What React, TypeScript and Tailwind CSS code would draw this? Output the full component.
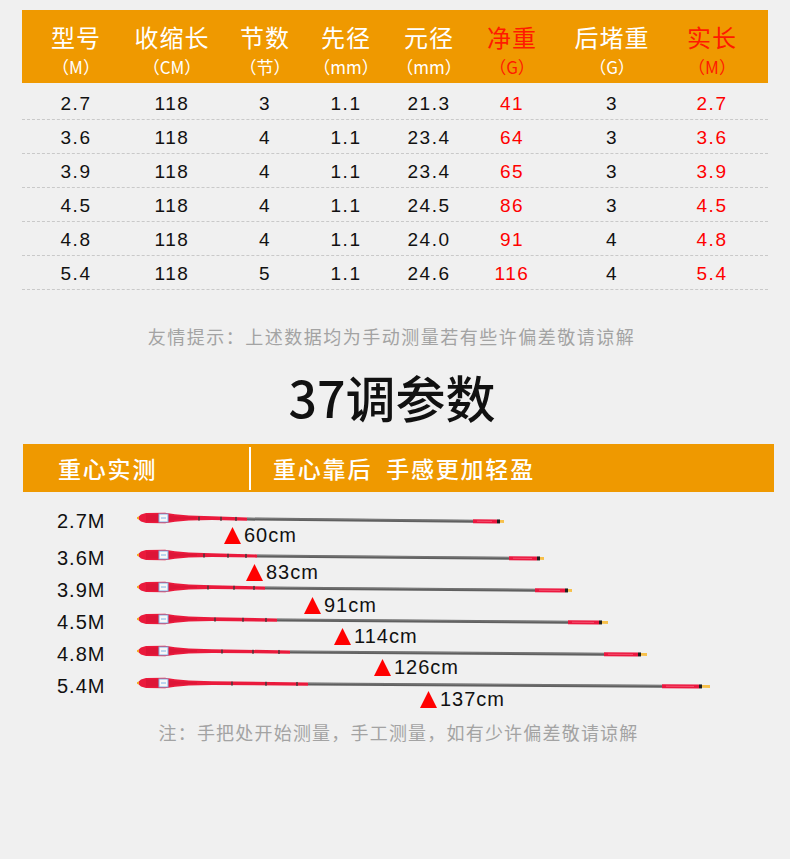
import React from "react";

const headers = [
  { t: "型号", s: "（M）", red: false },
  { t: "收缩长", s: "（CM）", red: false },
  { t: "节数", s: "（节）", red: false },
  { t: "先径", s: "（mm）", red: false },
  { t: "元径", s: "（mm）", red: false },
  { t: "净重", s: "（G）", red: true },
  { t: "后堵重", s: "（G）", red: false },
  { t: "实长", s: "（M）", red: true },
];

const rows = [
  ["2.7", "118", "3", "1.1", "21.3", "41", "3", "2.7"],
  ["3.6", "118", "4", "1.1", "23.4", "64", "3", "3.6"],
  ["3.9", "118", "4", "1.1", "23.4", "65", "3", "3.9"],
  ["4.5", "118", "4", "1.1", "24.5", "86", "3", "4.5"],
  ["4.8", "118", "4", "1.1", "24.0", "91", "4", "4.8"],
  ["5.4", "118", "5", "1.1", "24.6", "116", "4", "5.4"],
];

const rods = [
  { label: "2.7M", H: 247, R: 473, D: 497, E: 504, m: 224, mt: "60cm", top: "top-[23px]" },
  { label: "3.6M", H: 257, R: 509, D: 537, E: 544, m: 246, mt: "83cm", top: "top-[23px]" },
  { label: "3.9M", H: 265, R: 535, D: 565, E: 572, m: 304, mt: "91cm", top: "top-[24px]" },
  { label: "4.5M", H: 277, R: 568, D: 599, E: 608, m: 334, mt: "114cm", top: "top-[23px]" },
  { label: "4.8M", H: 290, R: 604, D: 638, E: 647, m: 374, mt: "126cm", top: "top-[22px]" },
  { label: "5.4M", H: 308, R: 662, D: 699, E: 710, m: 420, mt: "137cm", top: "top-[22px]" },
];

function Rod({ H, R, D, E }: { H: number; R: number; D: number; E: number }) {
  const w = E - 137 + 4;
  const s = 3.5 / (E - 137);
  const y = (px: number) => 10 + (px - 137) * s;
  const lx = (px: number) => px - 137;
  const hx = lx(H);
  const yh = y(H);
  const top = [
    [2, 8.3],
    [4, 6.6],
    [9, 5],
    [28, 4.8],
    [38, 6.3],
    [52, 7.5],
    [75, 8.2],
    [hx, yh - 1.6],
  ];
  const bottom = [
    [hx, yh + 1.6],
    [75, 11.9],
    [52, 12.6],
    [38, 13.8],
    [28, 15.2],
    [9, 15],
    [4, 13.4],
    [2, 11.7],
  ];
  const poly = [...top, ...bottom].map((p) => p.join(",")).join(" ");
  const marks = [Math.round(hx * 0.55), Math.round(hx * 0.75), hx - 12];
  return (
    <svg width={w} height={20} viewBox={`0 0 ${w} 20`} className="block">
      <polygon points="0,9.2 2.5,8 2.5,12 0,10.8" fill="#f5a623" />
      <polygon points={poly} fill="#ea1a3c" />
      <polygon points={`9,6.5 28,6.3 40,8.6 60,9.2 60,10.8 40,11.4 28,13.7 9,13.5`} fill="#c50f2e" opacity="0.35" />
      <rect x={22} y={6} width={9} height={8} fill="#f7f7f7" stroke="#7fb2e6" strokeWidth={1} />
      <line x1={24} y1={10} x2={29} y2={10} stroke="#7fb2e6" strokeWidth={1} />
      {marks.map((mx, i) => (
        <rect key={i} x={mx} y={y(mx + 137) - 2} width={2} height={4} fill="#3a3a3a" opacity="0.7" />
      ))}
      <line x1={hx} y1={yh} x2={lx(R)} y2={y(R)} stroke="#5f5f5f" strokeWidth={3} />
      <line x1={hx} y1={yh - 0.7} x2={lx(R)} y2={y(R) - 0.7} stroke="#8e8e8e" strokeWidth={0.6} />
      <line x1={lx(R)} y1={y(R)} x2={lx(D)} y2={y(D)} stroke="#ec1840" strokeWidth={4} />
      <line x1={lx(R) + 4} y1={y(R)} x2={lx(D) - 5} y2={y(D)} stroke="#f78a9c" strokeWidth={0.5} />
      <line x1={lx(D)} y1={y(D)} x2={lx(D) + 3} y2={y(D)} stroke="#1f1f1f" strokeWidth={4} />
      <line x1={lx(D) + 3} y1={y(D)} x2={lx(E)} y2={y(E)} stroke="#f7c04a" strokeWidth={2.8} />
    </svg>
  );
}

export default function App() {
  const latin = "font-['Liberation_Sans','Noto_Sans_CJK_SC',sans-serif]";
  return (
    <div className="w-[790px] h-[859px] bg-[#f0f0f0] pt-[10px] font-['Noto_Sans_CJK_SC',sans-serif] overflow-hidden [text-spacing-trim:space-all]">
      {/* Spec table */}
      <div className="mx-[22px]">
        <div className="grid grid-cols-[108px_84px_102px_60px_106px_60px_140px_60px] h-[73px] bg-[#ef9900]">
          {headers.map((h, i) => (
            <div key={i} className={`flex flex-col items-center whitespace-nowrap ${h.red ? "text-[#ff1a00]" : "text-white"}`}>
              <div className="pt-[13px] text-[24px] leading-[28px] tracking-[1px]">{h.t}</div>
              <div className="mt-[5px] text-[17px] leading-[22px]">{h.s}</div>
            </div>
          ))}
        </div>
        <div className="pt-[3px]">
          {rows.map((r, ri) => (
            <div
              key={ri}
              className="grid grid-cols-[108px_84px_102px_60px_106px_60px_140px_60px] h-[34px] border-b border-dashed border-[#c9c9c9]"
            >
              {r.map((c, ci) => (
                <div
                  key={ci}
                  className={`flex items-center justify-center pt-[4px] text-[19px] tracking-[1.5px] ${latin} ${
                    ci === 5 || ci === 7 ? "text-[#ff0000]" : "text-[#111111]"
                  }`}
                >
                  {c}
                </div>
              ))}
            </div>
          ))}
        </div>
      </div>

      {/* Hint */}
      <div className="mt-[34px] pr-[7px] text-center text-[18px] leading-[24px] tracking-[1.5px] text-[#a3a3a3]">
        友情提示：上述数据均为手动测量若有些许偏差敬请谅解
      </div>

      {/* Title */}
      <div className="mt-[19px] pr-[6px] text-center text-[50px] leading-[58px] text-[#111111] font-medium">37调参数</div>

      {/* Orange bar */}
      <div className="mt-[19px] ml-[23px] mr-[16px] h-[48px] bg-[#ef9900] flex items-center text-white text-[23px] tracking-[1.8px] font-medium">
        <div className="w-[226px] pl-[35px]">重心实测</div>
        <div className="w-[2px] h-[43px] bg-white"></div>
        <div className="pl-[22px] whitespace-pre">重心靠后  手感更加轻盈</div>
      </div>

      {/* Rods */}
      <div className="mt-[10px] flex flex-col">
        {rods.map((r, i) => (
          <div key={i} className={`relative h-[32px] flex items-center ${i === 1 ? "mt-[5px]" : ""}`}>
            <div className={`w-[80px] pl-[57px] text-[20px] tracking-[1px] text-[#111111] pt-[5px] ${latin}`}>
              <span className="whitespace-nowrap">{r.label}</span>
            </div>
            <div className="ml-[57px]">
              <Rod H={r.H} R={r.R} D={r.D} E={r.E} />
            </div>
            <div className={`absolute ${r.top} flex items-center h-[20px]`} style={{ left: r.m }}>
              <svg width="17" height="17" viewBox="0 0 17 17" className="block">
                <polygon points="8.5,0 17,17 0,17" fill="#ff0000" />
              </svg>
              <span className={`ml-[3px] text-[20px] leading-[20px] tracking-[1px] text-[#111111] ${latin}`}>{r.mt}</span>
            </div>
          </div>
        ))}
      </div>

      {/* Footer note */}
      <div className="mt-[21px] text-center text-[18px] leading-[24px] tracking-[1.2px] text-[#a3a3a3] pl-[7px]">
        注：手把处开始测量，手工测量，如有少许偏差敬请谅解
      </div>
    </div>
  );
}
